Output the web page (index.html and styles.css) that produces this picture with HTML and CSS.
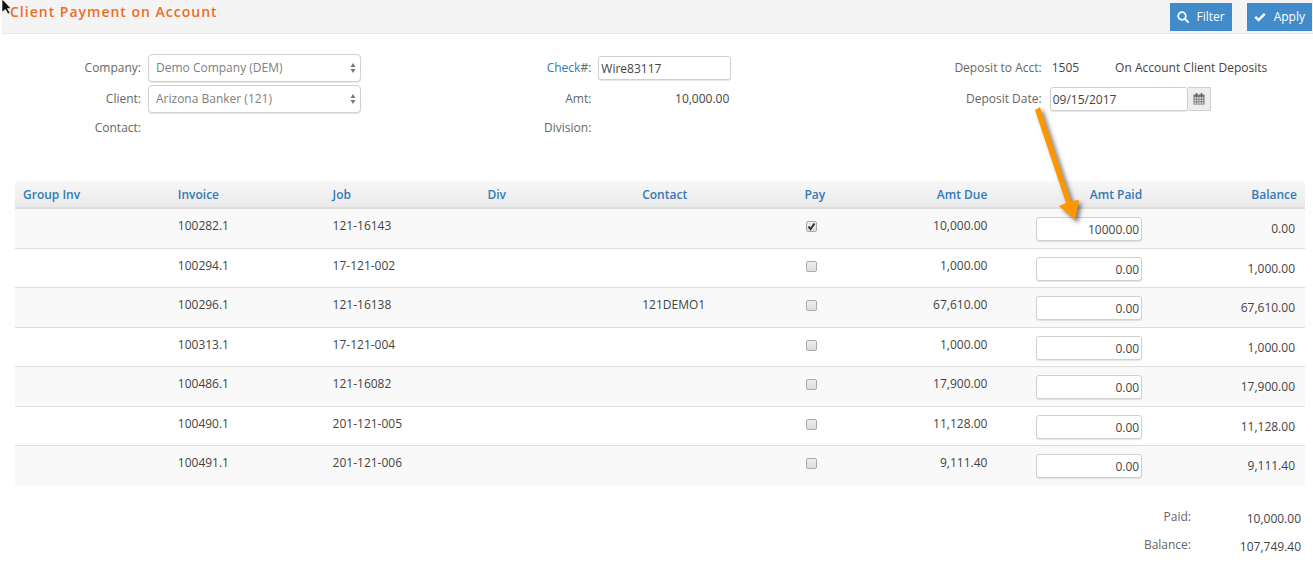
FILE: index.html
```html
<!DOCTYPE html>
<html lang="en">
<head>
  <meta charset="UTF-8">
  <meta name="viewport" content="width=device-width, initial-scale=1.0">
  <title>Client Payment on Account</title>
  <link rel="stylesheet" href="styles.css">
</head>
<body>
  <header class="toolbar">
    <h1>Client Payment on Account</h1>
    <div class="actions">
      <button type="button" class="btn">
        <svg width="12" height="12" viewBox="0 0 12 12" aria-hidden="true"><circle cx="5" cy="5" r="3.8" fill="none" stroke="#fff" stroke-width="1.7"/><path d="M7.8 7.8L11 11" stroke="#fff" stroke-width="2" stroke-linecap="round"/></svg>
        Filter
      </button>
      <button type="button" class="btn">
        <svg width="12" height="12" viewBox="0 0 12 12" aria-hidden="true"><path d="M1.3 5.8L4.6 9L10.7 2.9" fill="none" stroke="#fff" stroke-width="2.4"/></svg>
        Apply
      </button>
    </div>
  </header>

  <form class="details">
    <div class="fields">
      <label for="company">Company:</label>
      <div class="select">
        <select id="company"><option>Demo Company (DEM)</option></select>
        <svg width="6" height="10" viewBox="0 0 6 10" aria-hidden="true"><path d="M3 0L5.5 4H.5zM3 10L.5 6h5z" fill="#777"/></svg>
      </div>
      <label for="client">Client:</label>
      <div class="select">
        <select id="client"><option>Arizona Banker (121)</option></select>
        <svg width="6" height="10" viewBox="0 0 6 10" aria-hidden="true"><path d="M3 0L5.5 4H.5zM3 10L.5 6h5z" fill="#777"/></svg>
      </div>
      <span class="label">Contact:</span>
    </div>

    <div class="fields">
      <label for="check"><a href="#">Check</a>#:</label>
      <input type="text" id="check" class="check" value="Wire83117">
      <span class="label">Amt:</span>
      <span class="amount">10,000.00</span>
      <span class="label">Division:</span>
    </div>

    <div class="fields">
      <span class="label">Deposit to Acct:</span>
      <div class="account"><span>1505</span><span>On Account Client Deposits</span></div>
      <label for="date">Deposit Date:</label>
      <div class="date">
        <input type="text" id="date" value="09/15/2017">
        <button type="button" aria-label="Choose date">
          <svg width="12" height="12" viewBox="0 0 12 12" aria-hidden="true"><path d="M.5 1.500h11v10h-11z" fill="#777"/><path d="M3.500 0v3M8.500 0v3" stroke="#666" stroke-width="1.600"/><path d="M1.500 5h9M1.500 7.500h9M1.500 10h9" stroke="#eee" stroke-width="1.500" stroke-dasharray="1.600 .8"/></svg>
        </button>
      </div>
    </div>
  </form>

  <main>
    <table class="invoices">
      <thead>
        <tr>
          <th>Group Inv</th>
          <th>Invoice</th>
          <th>Job</th>
          <th>Div</th>
          <th>Contact</th>
          <th class="pay">Pay</th>
          <th class="num">Amt Due</th>
          <th class="num">Amt Paid</th>
          <th class="num">Balance</th>
        </tr>
      </thead>
      <tbody>
        <tr>
          <td></td><td>100282.1</td><td>121-16143</td><td></td><td></td>
          <td class="pay"><input type="checkbox" aria-label="Pay 100282.1" checked></td>
          <td class="num">10,000.00</td>
          <td class="num"><input type="text" aria-label="Amt paid 100282.1" value="10000.00"></td>
          <td class="num balance">0.00</td>
        </tr>
        <tr>
          <td></td><td>100294.1</td><td>17-121-002</td><td></td><td></td>
          <td class="pay"><input type="checkbox" aria-label="Pay 100294.1"></td>
          <td class="num">1,000.00</td>
          <td class="num"><input type="text" aria-label="Amt paid 100294.1" value="0.00"></td>
          <td class="num balance">1,000.00</td>
        </tr>
        <tr>
          <td></td><td>100296.1</td><td>121-16138</td><td></td><td>121DEMO1</td>
          <td class="pay"><input type="checkbox" aria-label="Pay 100296.1"></td>
          <td class="num">67,610.00</td>
          <td class="num"><input type="text" aria-label="Amt paid 100296.1" value="0.00"></td>
          <td class="num balance">67,610.00</td>
        </tr>
        <tr>
          <td></td><td>100313.1</td><td>17-121-004</td><td></td><td></td>
          <td class="pay"><input type="checkbox" aria-label="Pay 100313.1"></td>
          <td class="num">1,000.00</td>
          <td class="num"><input type="text" aria-label="Amt paid 100313.1" value="0.00"></td>
          <td class="num balance">1,000.00</td>
        </tr>
        <tr>
          <td></td><td>100486.1</td><td>121-16082</td><td></td><td></td>
          <td class="pay"><input type="checkbox" aria-label="Pay 100486.1"></td>
          <td class="num">17,900.00</td>
          <td class="num"><input type="text" aria-label="Amt paid 100486.1" value="0.00"></td>
          <td class="num balance">17,900.00</td>
        </tr>
        <tr>
          <td></td><td>100490.1</td><td>201-121-005</td><td></td><td></td>
          <td class="pay"><input type="checkbox" aria-label="Pay 100490.1"></td>
          <td class="num">11,128.00</td>
          <td class="num"><input type="text" aria-label="Amt paid 100490.1" value="0.00"></td>
          <td class="num balance">11,128.00</td>
        </tr>
        <tr>
          <td></td><td>100491.1</td><td>201-121-006</td><td></td><td></td>
          <td class="pay"><input type="checkbox" aria-label="Pay 100491.1"></td>
          <td class="num">9,111.40</td>
          <td class="num"><input type="text" aria-label="Amt paid 100491.1" value="0.00"></td>
          <td class="num balance">9,111.40</td>
        </tr>
      </tbody>
    </table>

    <dl class="totals">
      <dt>Paid:</dt><dd>10,000.00</dd>
      <dt>Balance:</dt><dd>107,749.40</dd>
    </dl>
  </main>

  <!-- Arrow and pointer lie over the page -->
  <svg class="arrow" width="60" height="124" viewBox="0 0 60 124" aria-hidden="true"><path d="M3 5L8 2L39 96L47 95L43 115L27 101L34 98Z" fill="#ff9500"/></svg>
  <svg class="pointer" width="12" height="16" viewBox="0 0 12 16" aria-hidden="true"><path d="M0 0H1L9 8.500H5.500L8 13L6 14L3.500 9.500L0 12Z" fill="#111" stroke="#fff" stroke-width=".6"/></svg>
</body>
</html>
```

FILE: styles.css
```css
* {
  box-sizing: border-box;
}
body {
  position: relative;
  margin: 0;
  background: #fff;
  color: #444;
  font: 12px/18px "Open Sans", "Noto Sans", sans-serif;
}
input, select, button {
  font: inherit;
  color: inherit;
}
a {
  color: #337ab7;
  text-decoration: none;
}

/* Toolbar */
.toolbar {
  display: flex;
  justify-content: space-between;
  align-items: flex-start;
  height: 34px;
  margin-left: 2px;
  padding: 3px 1px 0 8px;
  background: #f4f4f4;
  border-bottom: 1px solid #e6e6e6;
}
h1 {
  margin: 0;
  color: #ee6c26;
  font-size: 14px;
  font-weight: 600;
  line-height: 18px;
  letter-spacing: 1px;
}
.actions {
  display: flex;
  gap: 15px;
}
.btn {
  display: flex;
  align-items: center;
  gap: 8px;
  height: 28px;
  padding: 0 7px;
  border: 0;
  background: #428bca;
  color: #fff;
}

/* Payment details */
.details {
  display: grid;
  grid-template-columns: repeat(3, 1fr);
  gap: 60px;
  padding: 20px 8px 0 14px;
}
.fields {
  display: grid;
  grid-template-columns: 127px 1fr;
  grid-template-rows: 28px 28px 24px;
  gap: 3px 7px;
  align-items: center;
}
.fields label, .label {
  color: #666;
  text-align: right;
}
.select {
  position: relative;
  width: 213px;
}
.select select {
  display: block;
  width: 100%;
  height: 28px;
  padding: 0 7px;
  appearance: none;
  background: #fff;
  border: 1px solid #d0d0d0;
  border-radius: 4px;
  box-shadow: 0 1px 1px rgba(0, 0, 0, 0.1);
  color: #808080;
}
.select svg {
  position: absolute;
  top: 9px;
  right: 5px;
  pointer-events: none;
}
input[type="text"] {
  height: 24px;
  padding: 0 2px;
  background: #fff;
  border: 1px solid #d0d0d0;
  border-radius: 3px;
  box-shadow: 0 1px 1px rgba(0, 0, 0, 0.1);
}
.check, .amount {
  width: 133px;
}
.amount {
  padding-right: 2px;
  text-align: right;
}
.account {
  display: flex;
  gap: 36px;
  padding-left: 3px;
}
.date {
  display: flex;
  padding-left: 1px;
}
.date input {
  width: 138px;
}
.date button {
  display: flex;
  align-items: center;
  justify-content: center;
  width: 23px;
  height: 24px;
  padding: 0;
  background: #eee;
  border: 1px solid #d0d0d0;
  border-left: 0;
}

/* Invoice table */
main {
  padding: 41px 8px 0 15px;
}
.invoices {
  width: 100%;
  table-layout: fixed;
  border-collapse: separate;
  border-spacing: 0;
}
th, td {
  width: 12%;
  padding: 8px 8px 0;
  text-align: left;
  vertical-align: top;
}
th {
  height: 28px;
  padding-top: 5px;
  background: linear-gradient(#f8f8f8, #e9e9e9);
  border-bottom: 2px solid #ddd;
  color: #337ab7;
  font-weight: 600;
}
td {
  height: 39px;
  border-bottom: 1px solid #ddd;
}
tbody tr:nth-child(odd) td {
  height: 40px;
  background: #f9f9f9;
}
tbody tr:last-child td {
  border-bottom: 0;
}
.pay {
  width: 4%;
  text-align: center;
}
.num {
  text-align: right;
}
.num input {
  display: block;
  width: 106px;
  margin-left: auto;
  text-align: right;
}
td.balance {
  padding: 11px 10px 0 8px;
}
input[type="checkbox"] {
  width: 11px;
  height: 11px;
  margin: 4px 6px 0 0;
  appearance: none;
  vertical-align: top;
  background: linear-gradient(#eee, #ddd) center / 9px no-repeat;
  border: 1px solid #aaa;
  border-radius: 2px;
}
input[type="checkbox"]:checked {
  background-image: url("data:image/svg+xml,%3Csvg xmlns='http://www.w3.org/2000/svg' viewBox='0 0 9 9'%3E%3Cpath d='M1.500 4.500L3.500 7L7.500 1.500' fill='none' stroke='%23333' stroke-width='2'/%3E%3C/svg%3E"), linear-gradient(#eee, #ddd);
}

.totals {
  display: grid;
  grid-template-columns: 1fr 110px;
  gap: 8px 0;
  margin: 22px 0 0;
  padding-right: 4px;
  text-align: right;
}
.totals dt {
  color: #666;
}
.totals dd {
  margin: 0;
  padding-top: 2px;
}

/* Overlays */
.arrow {
  position: absolute;
  top: 105px;
  right: 221px;
  pointer-events: none;
  filter: drop-shadow(3px 3px 2px rgba(0, 0, 0, 0.5));
}
.pointer {
  position: absolute;
  top: 0;
  left: 2px;
  pointer-events: none;
}
```
